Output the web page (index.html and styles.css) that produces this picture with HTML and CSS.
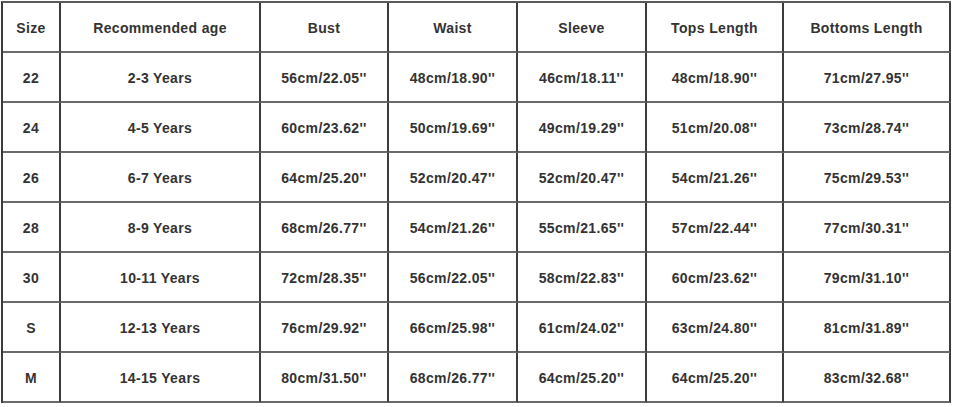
FILE: index.html
```html
<!DOCTYPE html>
<html lang="en">
<head>
<meta charset="utf-8">
<title>Size Chart</title>
<link rel="stylesheet" href="styles.css">
</head>
<body>
<div class="chart" role="table" aria-label="Size chart">
  <div class="cell head" role="columnheader">Size</div>
  <div class="cell head" role="columnheader">Recommended age</div>
  <div class="cell head" role="columnheader">Bust</div>
  <div class="cell head" role="columnheader">Waist</div>
  <div class="cell head" role="columnheader">Sleeve</div>
  <div class="cell head" role="columnheader">Tops Length</div>
  <div class="cell head" role="columnheader">Bottoms Length</div>

  <div class="cell">22</div><div class="cell">2-3 Years</div><div class="cell">56cm/22.05''</div><div class="cell">48cm/18.90''</div><div class="cell">46cm/18.11''</div><div class="cell">48cm/18.90''</div><div class="cell">71cm/27.95''</div>
  <div class="cell">24</div><div class="cell">4-5 Years</div><div class="cell">60cm/23.62''</div><div class="cell">50cm/19.69''</div><div class="cell">49cm/19.29''</div><div class="cell">51cm/20.08''</div><div class="cell">73cm/28.74''</div>
  <div class="cell">26</div><div class="cell">6-7 Years</div><div class="cell">64cm/25.20''</div><div class="cell">52cm/20.47''</div><div class="cell">52cm/20.47''</div><div class="cell">54cm/21.26''</div><div class="cell">75cm/29.53''</div>
  <div class="cell">28</div><div class="cell">8-9 Years</div><div class="cell">68cm/26.77''</div><div class="cell">54cm/21.26''</div><div class="cell">55cm/21.65''</div><div class="cell">57cm/22.44''</div><div class="cell">77cm/30.31''</div>
  <div class="cell">30</div><div class="cell">10-11 Years</div><div class="cell">72cm/28.35''</div><div class="cell">56cm/22.05''</div><div class="cell">58cm/22.83''</div><div class="cell">60cm/23.62''</div><div class="cell">79cm/31.10''</div>
  <div class="cell">S</div><div class="cell">12-13 Years</div><div class="cell">76cm/29.92''</div><div class="cell">66cm/25.98''</div><div class="cell">61cm/24.02''</div><div class="cell">63cm/24.80''</div><div class="cell">81cm/31.89''</div>
  <div class="cell">M</div><div class="cell">14-15 Years</div><div class="cell">80cm/31.50''</div><div class="cell">68cm/26.77''</div><div class="cell">64cm/25.20''</div><div class="cell">64cm/25.20''</div><div class="cell">83cm/32.68''</div>
</div>
</body>
</html>
```
FILE: styles.css
```css
html, body {
  margin: 0;
  padding: 0;
  background: #ffffff;
}

body {
  padding: 1px 0 0 1px;
}

.chart {
  display: grid;
  grid-template-columns: 58px 200px 128px 129px 129px 137px 167px;
  grid-auto-rows: 50px;
  width: max-content;
  border-left: 2px solid #3c3c3c;
  border-top: 2px solid #5a5a5a;
  font-family: "Liberation Sans", Arial, sans-serif;
  font-size: 14px;
  font-weight: 700;
  letter-spacing: 0.35px;
  color: #333333;
}

.cell {
  box-sizing: border-box;
  display: flex;
  align-items: center;
  justify-content: center;
  padding-top: 2px;
  border-right: 2px solid #3c3c3c;
  border-bottom: 2px solid #6a6a6a;
  white-space: nowrap;
}
```
